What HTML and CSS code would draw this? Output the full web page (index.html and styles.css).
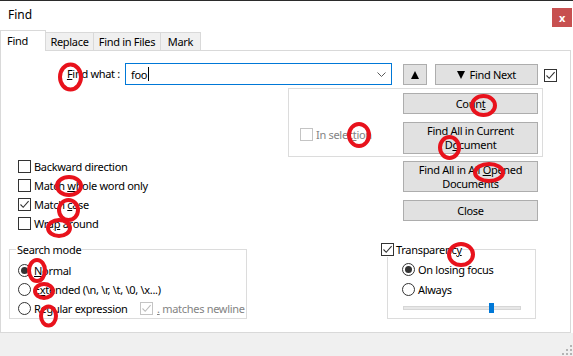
FILE: index.html
```html
<!DOCTYPE html>
<html lang="en">
<head>
    <meta charset="UTF-8">
    <title>Find</title>
    <link rel="stylesheet" href="styles.css">
</head>
<body>
    <div class="window">
        <div class="titlebar">
            <span class="title">Find</span>
            <span class="close">x</span>
        </div>

        <div class="tabs">
            <div class="tab active">Find</div>
            <div class="tab tab-replace">Replace</div>
            <div class="tab tab-files">Find in Files</div>
            <div class="tab tab-mark">Mark</div>
        </div>

        <div class="panel">
            <div class="find-row">
                <label class="find-label"><u>F</u>ind what :</label>
                <div class="combo">
                    <span class="combo-text">foo</span><span class="caret"></span>
                    <svg class="chevron" width="9" height="5" viewBox="0 0 9 5"><path d="M0.5 0.5 L4.5 4.5 L8.5 0.5" fill="none" stroke="#5a5a5a" stroke-width="1"/></svg>
                </div>
                <button class="btn btn-up">
                    <svg width="8" height="8" viewBox="0 0 8 8"><polygon points="4,0 8,8 0,8" fill="#000"/></svg>
                </button>
                <button class="btn btn-next">
                    <svg width="8" height="8" viewBox="0 0 8 8"><polygon points="0,0 8,0 4,8" fill="#000"/></svg>
                    Find Next
                </button>
                <span class="box">
                    <svg viewBox="0 0 11 11"><path d="M1.5 5.5 L4.2 8.3 L9.6 2.2" fill="none" stroke="#333" stroke-width="1.1"/></svg>
                </span>
            </div>

            <div class="body-grid">
                <div></div>
                <div class="sel-group">
                    <div class="opt dis sel-opt">
                        <span class="box dis"></span>
                        <span>In selec<u>t</u>ion</span>
                    </div>
                    <div class="btn-col">
                        <button class="btn">Coun<u>t</u></button>
                        <button class="btn tall">Find All in Current<br>D<u>o</u>cument</button>
                    </div>
                </div>

                <div class="options">
                    <div class="opt"><span class="box"></span><span>Backward direction</span></div>
                    <div class="opt"><span class="box"></span><span>Match <u>w</u>hole word only</span></div>
                    <div class="opt">
                        <span class="box"><svg viewBox="0 0 11 11"><path d="M1.5 5.5 L4.2 8.3 L9.6 2.2" fill="none" stroke="#333" stroke-width="1.1"/></svg></span>
                        <span>Match <u>c</u>ase</span>
                    </div>
                    <div class="opt"><span class="box"></span><span>Wra<u>p</u> around</span></div>
                </div>
                <div class="side-buttons">
                    <button class="btn tall-2">Find All in All <u>O</u>pened<br>Documents</button>
                    <button class="btn">Close</button>
                </div>

                <div class="group mode-group">
                    <span class="legend">Search mode</span>
                    <div class="opt"><span class="radio on"></span><span><u>N</u>ormal</span></div>
                    <div class="opt"><span class="radio"></span><span>E<u>x</u>tended (\n, \r, \t, \0, \x...)</span></div>
                    <div class="opt">
                        <span class="radio"></span><span class="regex-label">Re<u>g</u>ular expression</span>
                        <span class="box dis"><svg viewBox="0 0 11 11"><path d="M1.5 5.5 L4.2 8.3 L9.6 2.2" fill="none" stroke="#bcbcbc" stroke-width="1.1"/></svg></span>
                        <span class="dis"><u>.</u> matches newline</span>
                    </div>
                </div>
                <div class="group trans-group">
                    <span class="legend trans-legend">
                        <span class="box"><svg viewBox="0 0 11 11"><path d="M1.5 5.5 L4.2 8.3 L9.6 2.2" fill="none" stroke="#333" stroke-width="1.1"/></svg></span>
                        <span>Transparenc<u>y</u></span>
                    </span>
                    <div class="opt tall-opt"><span class="radio on"></span><span>On losing focus</span></div>
                    <div class="opt tall-opt"><span class="radio"></span><span>Always</span></div>
                    <div class="slider"><span class="thumb"></span></div>
                </div>
            </div>
        </div>

        <div class="footer">
            <svg class="grip" width="10" height="10" viewBox="0 0 10 10">
                <rect x="8" y="0" width="2" height="2" fill="#b4b4b4"/>
                <rect x="8" y="4" width="2" height="2" fill="#b4b4b4"/>
                <rect x="4" y="4" width="2" height="2" fill="#b4b4b4"/>
                <rect x="8" y="8" width="2" height="2" fill="#b4b4b4"/>
                <rect x="4" y="8" width="2" height="2" fill="#b4b4b4"/>
                <rect x="0" y="8" width="2" height="2" fill="#b4b4b4"/>
            </svg>
        </div>
    </div>

    <!-- red marks drawn over the dialog -->
    <svg class="marks" width="573" height="356" viewBox="0 0 573 356">
        <g fill="none" stroke="#e8121c" stroke-width="4">
            <ellipse cx="70.5" cy="77" rx="10.5" ry="12.5"/>
            <ellipse cx="483.5" cy="105.5" rx="11.5" ry="9.5"/>
            <ellipse cx="359" cy="135" rx="10" ry="11"/>
            <ellipse cx="449.5" cy="147.5" rx="9.5" ry="10.5"/>
            <ellipse cx="489" cy="172.5" rx="14" ry="8.5"/>
            <ellipse cx="69" cy="186" rx="12" ry="9"/>
            <ellipse cx="68.5" cy="210" rx="9.5" ry="10"/>
            <ellipse cx="59" cy="228" rx="11" ry="8"/>
            <ellipse cx="37" cy="270.5" rx="8" ry="10.5"/>
            <ellipse cx="44" cy="291" rx="9" ry="7"/>
            <ellipse cx="48.5" cy="316" rx="7.5" ry="9.5"/>
            <ellipse cx="461" cy="254.5" rx="12" ry="10.5"/>
        </g>
    </svg>
</body>
</html>
```

FILE: styles.css
```css
:root {
    --border-color: #d9d9d9;
    --btn-bg: #e1e1e1;
    --btn-border: #adadad;
    --accent: #0078d7;
    --text-color: #000000;
    --disabled: #838383;
}

* {
    margin: 0;
    padding: 0;
    box-sizing: border-box;
}

body {
    font-family: "Noto Sans", sans-serif;
    font-size: 11px;
    line-height: 15px;
    letter-spacing: -0.3px;
    color: var(--text-color);
    background-color: #ffffff;
    width: 573px;
    height: 356px;
    overflow: hidden;
    position: relative;
}

u {
    text-decoration: underline;
    text-underline-offset: 1px;
}

.window {
    display: flex;
    flex-direction: column;
    height: 356px;
    border-top: 1px solid #2b2b2b;
}

.titlebar {
    height: 30px;
    display: flex;
    align-items: flex-start;
    padding-left: 8px;
}

.title {
    font-size: 12px;
    line-height: 16px;
    margin-top: 6px;
    letter-spacing: 0;
}

.close {
    margin-left: auto;
    margin-top: 7px;
    margin-right: 1px;
    width: 20px;
    height: 19px;
    background-color: #c75050;
    color: white;
    font-weight: bold;
    font-size: 11px;
    display: flex;
    align-items: center;
    justify-content: center;
}

.tabs {
    height: 20px;
    display: flex;
    align-items: flex-end;
    margin-bottom: -1px;
    position: relative;
    z-index: 1;
}

.tab {
    height: 19px;
    background-color: #f0f0f0;
    border: 1px solid var(--border-color);
    padding-top: 1px;
    text-align: center;
}

.tab.active {
    height: 21px;
    width: 46px;
    background-color: #ffffff;
    border-bottom: none;
    text-align: left;
    padding-left: 6px;
    padding-top: 2px;
}

.tab-replace {
    width: 48px;
    border-left: none;
}

.tab-files {
    width: 67px;
    border-left: none;
}

.tab-mark {
    width: 40px;
    border-left: none;
}

.panel {
    width: 571px;
    height: 283px;
    border: 1px solid var(--border-color);
}

.find-row {
    display: flex;
    align-items: flex-start;
    margin-top: 12px;
    height: 22px;
}

.find-label {
    width: 120px;
    text-align: right;
    line-height: 22px;
    padding-right: 1px;
}

.combo {
    width: 267px;
    height: 22px;
    margin-left: 4px;
    border: 1px solid var(--accent);
    display: flex;
    align-items: center;
    padding-left: 5px;
}

.caret {
    width: 1px;
    height: 14px;
    background-color: #000;
    margin-left: 1px;
}

.chevron {
    margin-left: auto;
    margin-right: 5px;
}

.btn {
    display: block;
    background-color: var(--btn-bg);
    border: 1px solid var(--btn-border);
    font-family: inherit;
    font-size: 11px;
    line-height: 14px;
    letter-spacing: -0.3px;
    color: var(--text-color);
    height: 21px;
    width: 135px;
    text-align: center;
    white-space: nowrap;
}

.btn svg {
    vertical-align: 0;
    margin-right: 2px;
}

.btn-up svg {
    margin-right: 0;
}

.btn-up {
    width: 24px;
    margin-left: 11px;
    margin-top: 1px;
}

.btn-next {
    width: 103px;
    margin-left: 8px;
    margin-top: 1px;
}

.find-row .box {
    margin-left: 6px;
    margin-top: 6px;
}

.box {
    width: 13px;
    height: 13px;
    border: 1px solid #333;
    background-color: #fff;
    display: inline-flex;
    flex-shrink: 0;
}

.box svg {
    width: 11px;
    height: 11px;
}

.box.dis {
    border-color: #c4c4c4;
}

.dis {
    color: var(--disabled);
}

.radio {
    width: 13px;
    height: 13px;
    border: 1px solid #333;
    border-radius: 50%;
    background-color: #fff;
    display: inline-flex;
    align-items: center;
    justify-content: center;
    flex-shrink: 0;
}

.radio.on::after {
    content: '';
    width: 7px;
    height: 7px;
    border-radius: 50%;
    background-color: #333;
}

.body-grid {
    display: grid;
    grid-template-columns: 279px 255px;
    padding-left: 8px;
    margin-top: 3px;
    align-items: start;
}

.sel-group {
    height: 69px;
    border: 1px solid #dcdcdc;
    display: flex;
}

.sel-opt {
    flex: 1;
    padding-left: 11px;
    margin-top: 36px;
}

.btn-col {
    display: flex;
    flex-direction: column;
    gap: 8px;
    padding-top: 4px;
    margin-right: 4px;
}

.btn.tall {
    height: 32px;
}

.btn.tall-2 {
    height: 31px;
}

.options {
    padding-left: 9px;
}

.opt {
    display: flex;
    align-items: center;
    gap: 3px;
    height: 19px;
    white-space: nowrap;
}

.side-buttons {
    display: flex;
    flex-direction: column;
    gap: 8px;
    padding-left: 115px;
    padding-top: 4px;
}

.group {
    position: relative;
    border: 1px solid #dcdcdc;
    height: 70px;
    margin-top: 16px;
}

.legend {
    position: absolute;
    top: -8px;
    left: 6px;
    background-color: #fff;
    padding: 0 1px;
    white-space: nowrap;
}

.mode-group {
    width: 238px;
    padding-left: 8px;
    padding-top: 11px;
}

.regex-label {
    width: 103px;
    flex-shrink: 0;
}

.mode-group .box {
    margin-right: 1px;
}

.trans-group {
    width: 149px;
    margin-left: 99px;
    padding-left: 14px;
    padding-top: 9px;
}

.trans-legend {
    left: -7px;
    padding: 0;
    display: flex;
    align-items: center;
    gap: 2px;
}

.tall-opt {
    height: 20px;
}

.slider {
    position: relative;
    width: 118px;
    height: 4px;
    margin-left: 1px;
    margin-top: 7px;
    background-color: #e7e7e7;
    border: 1px solid #d6d6d6;
}

.thumb {
    position: absolute;
    left: 85px;
    top: -4px;
    width: 5px;
    height: 10px;
    background-color: var(--accent);
}

.footer {
    flex: 1;
    background-color: #f0f0f0;
    display: flex;
    justify-content: flex-end;
    align-items: flex-end;
    padding: 0 1px 1px 0;
}

.marks {
    position: absolute;
    top: 0;
    left: 0;
    pointer-events: none;
}
```
